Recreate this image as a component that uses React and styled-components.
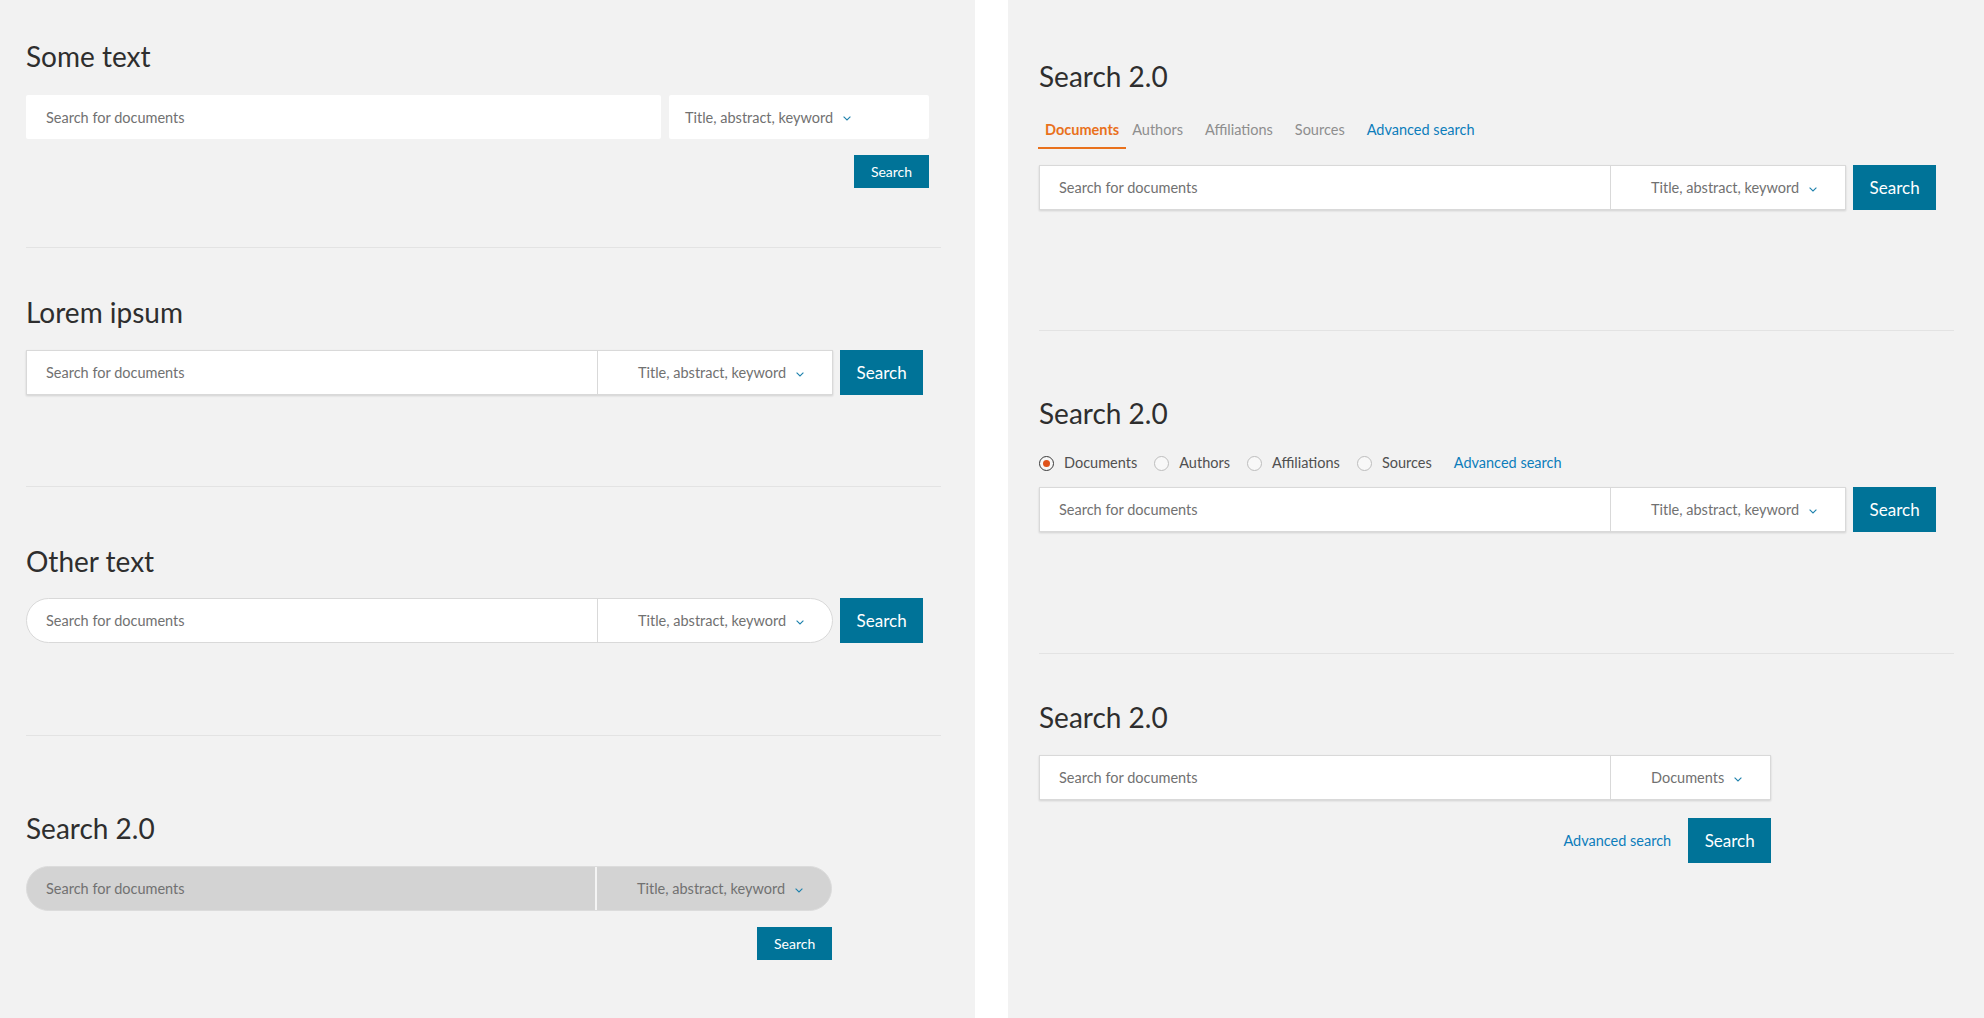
import React from "react";
import styled, { createGlobalStyle } from "styled-components";

const GlobalStyle = createGlobalStyle`
  html, body {
    margin: 0;
    padding: 0;
    background: #fff;
  }
  body {
    font-family: Lato, "Open Sans", sans-serif;
  }
  * {
    box-sizing: border-box;
  }
`;

const Chevron = () => (
  <svg width="8" height="5" viewBox="0 0 8 5" style={{ marginTop: 3 }}>
    <polyline points="0.6,0.6 4,4 7.4,0.6" fill="none" stroke="#1f82ad" strokeWidth="1.1" />
  </svg>
);

const SplitSearch = () => (
  <Stack $gap="16px">
    <SplitRow>
      <SplitField placeholder="Search for documents" />
      <SplitSelect>
        Title, abstract, keyword <Chevron />
      </SplitSelect>
    </SplitRow>
    <SearchButton $small>Search</SearchButton>
  </Stack>
);

const SearchBar = ({ round, filled, label = "Title, abstract, keyword" }) => (
  <Bar $round={round} $filled={filled}>
    <BarField placeholder="Search for documents" $filled={filled} />
    <BarSelect $filled={filled}>
      {label} <Chevron />
    </BarSelect>
  </Bar>
);

const App = () => {
  return (
    <>
      <GlobalStyle />
      <Page>
        <LeftPanel>
          <Section $pt="39px" $pb="59px" $divider>
            <Heading $mb="22px">Some text</Heading>
            <SplitSearch />
          </Section>

          <Section $pt="47px" $pb="91px" $divider>
            <Heading>Lorem ipsum</Heading>
            <Row>
              <SearchBar />
              <SearchButton>Search</SearchButton>
            </Row>
          </Section>

          <Section $pt="57px" $pb="92px" $divider>
            <Heading $mb="20px">Other text</Heading>
            <Row>
              <SearchBar round />
              <SearchButton>Search</SearchButton>
            </Row>
          </Section>

          <Section $pt="75px" $pb="0">
            <Heading>Search 2.0</Heading>
            <Stack $gap="16px">
              <SearchBar round filled />
              <SearchButton $small>Search</SearchButton>
            </Stack>
          </Section>
        </LeftPanel>

        <RightPanel>
          <Section $pt="59px" $pb="120px" $divider>
            <Heading $mb="27px">Search 2.0</Heading>
            <Tabs>
              <Tab $active>Documents</Tab>
              <Tab>Authors</Tab>
              <Tab>Affiliations</Tab>
              <Tab>Sources</Tab>
              <Tab $link>Advanced search</Tab>
            </Tabs>
            <Row>
              <SearchBar />
              <SearchButton>Search</SearchButton>
            </Row>
          </Section>

          <Section $pt="65px" $pb="121px" $divider>
            <Heading $mb="23px">Search 2.0</Heading>
            <RadioRow>
              <RadioOption>
                <RadioDot $checked /> Documents
              </RadioOption>
              <RadioOption>
                <RadioDot /> Authors
              </RadioOption>
              <RadioOption>
                <RadioDot /> Affiliations
              </RadioOption>
              <RadioOption>
                <RadioDot /> Sources
              </RadioOption>
              <Link $ml="5px">Advanced search</Link>
            </RadioRow>
            <Row>
              <SearchBar />
              <SearchButton>Search</SearchButton>
            </Row>
          </Section>

          <Section $pt="46px" $pb="0">
            <Heading>Search 2.0</Heading>
            <Stack $gap="18px">
              <SearchBar label="Documents" />
              <Row $center $gap="17px">
                <Link>Advanced search</Link>
                <SearchButton>Search</SearchButton>
              </Row>
            </Stack>
          </Section>
        </RightPanel>
      </Page>
    </>
  );
};

const Page = styled.div`
  display: flex;
  gap: 33px;
  min-height: 1018px;
  background: #fff;
`;

const LeftPanel = styled.div`
  width: 975px;
  flex-shrink: 0;
  background: #f2f2f2;
  padding: 0 34px 0 26px;
`;

const RightPanel = styled.div`
  flex: 1;
  background: #f2f2f2;
  padding: 0 30px 0 31px;
`;

const Section = styled.section`
  padding-top: ${(p) => p.$pt};
  padding-bottom: ${(p) => p.$pb};
  border-bottom: ${(p) => (p.$divider ? "1px solid #e3e3e3" : "none")};
`;

const Heading = styled.h2`
  margin: 0 0 ${(p) => p.$mb || "21px"};
  font-size: 28px;
  line-height: 34px;
  font-weight: 400;
  color: #2e2e2e;
`;

const Stack = styled.div`
  display: flex;
  flex-direction: column;
  align-items: flex-end;
  width: max-content;
  gap: ${(p) => p.$gap};
`;

const Row = styled.div`
  display: flex;
  align-items: ${(p) => (p.$center ? "center" : "flex-start")};
  gap: ${(p) => p.$gap || "7px"};
`;

const SplitRow = styled.div`
  display: flex;
  gap: 8px;
`;

const SplitField = styled.input`
  width: 635px;
  height: 44px;
  border: none;
  border-radius: 2px;
  background: #fff;
  padding: 0 20px;
  font-family: inherit;
  font-size: 14.5px;
  color: #333;
  outline: none;
  &::placeholder {
    color: #717171;
  }
`;

const SplitSelect = styled.div`
  width: 260px;
  height: 44px;
  border-radius: 2px;
  background: #fff;
  padding-left: 16px;
  display: flex;
  align-items: center;
  gap: 10px;
  font-size: 14.5px;
  color: #717171;
`;

const Bar = styled.div`
  display: flex;
  height: 45px;
  background: ${(p) => (p.$filled ? "#d3d3d3" : "#fff")};
  border: 1px solid ${(p) => (p.$filled ? "#dcdcdc" : "#d9d9d9")};
  border-radius: ${(p) => (p.$round ? "23px" : "0")};
  box-shadow: ${(p) => (p.$round ? "none" : "0 1px 2px rgba(0, 0, 0, 0.14)")};
  overflow: hidden;
`;

const BarField = styled.input`
  width: ${(p) => (p.$filled ? "568px" : "570px")};
  border: none;
  background: transparent;
  padding: 0 19px;
  font-family: inherit;
  font-size: 14.5px;
  color: #333;
  outline: none;
  &::placeholder {
    color: #717171;
  }
`;

const BarSelect = styled.div`
  display: flex;
  align-items: center;
  gap: 10px;
  padding: 0 28px 0 40px;
  border-left: ${(p) => (p.$filled ? "2px solid #f4f4f4" : "1px solid #d9d9d9")};
  font-size: 14.5px;
  color: #717171;
  white-space: nowrap;
`;

const SearchButton = styled.button`
  width: ${(p) => (p.$small ? "75px" : "83px")};
  height: ${(p) => (p.$small ? "33px" : "45px")};
  padding: 0;
  border: none;
  border-radius: 0;
  background: #007398;
  color: #fff;
  font-family: inherit;
  font-size: ${(p) => (p.$small ? "14px" : "17px")};
  cursor: pointer;
`;

const Tabs = styled.div`
  display: flex;
  margin: 0 0 16px -1px;
`;

const Tab = styled.div`
  padding: 0 7px 7px;
  margin-right: ${(p) => (p.$active ? "-1px" : "8px")};
  border-bottom: 2px solid ${(p) => (p.$active ? "#e9711c" : "transparent")};
  font-size: 14.5px;
  line-height: 20px;
  font-weight: ${(p) => (p.$active ? 700 : 400)};
  color: ${(p) => (p.$active ? "#e9711c" : p.$link ? "#0c7dbb" : "#8e8e8e")};
  cursor: pointer;
`;

const RadioRow = styled.div`
  display: flex;
  align-items: center;
  height: 20px;
  margin-bottom: 14px;
`;

const RadioOption = styled.label`
  display: flex;
  align-items: center;
  gap: 10px;
  margin-right: 17px;
  font-size: 14.5px;
  line-height: 20px;
  color: #505050;
`;

const RadioDot = styled.span`
  width: 15px;
  height: 15px;
  border-radius: 50%;
  border: 1.5px solid ${(p) => (p.$checked ? "#3a3a3a" : "#bdbdbd")};
  background: #f8f8f8;
  display: flex;
  align-items: center;
  justify-content: center;
  &::after {
    content: "";
    width: 7px;
    height: 7px;
    border-radius: 50%;
    background: ${(p) => (p.$checked ? "#df531b" : "transparent")};
  }
`;

const Link = styled.a`
  margin-left: ${(p) => p.$ml || "0"};
  font-size: 14.5px;
  line-height: 20px;
  color: #0c7dbb;
  text-decoration: none;
  cursor: pointer;
`;

export default App;
